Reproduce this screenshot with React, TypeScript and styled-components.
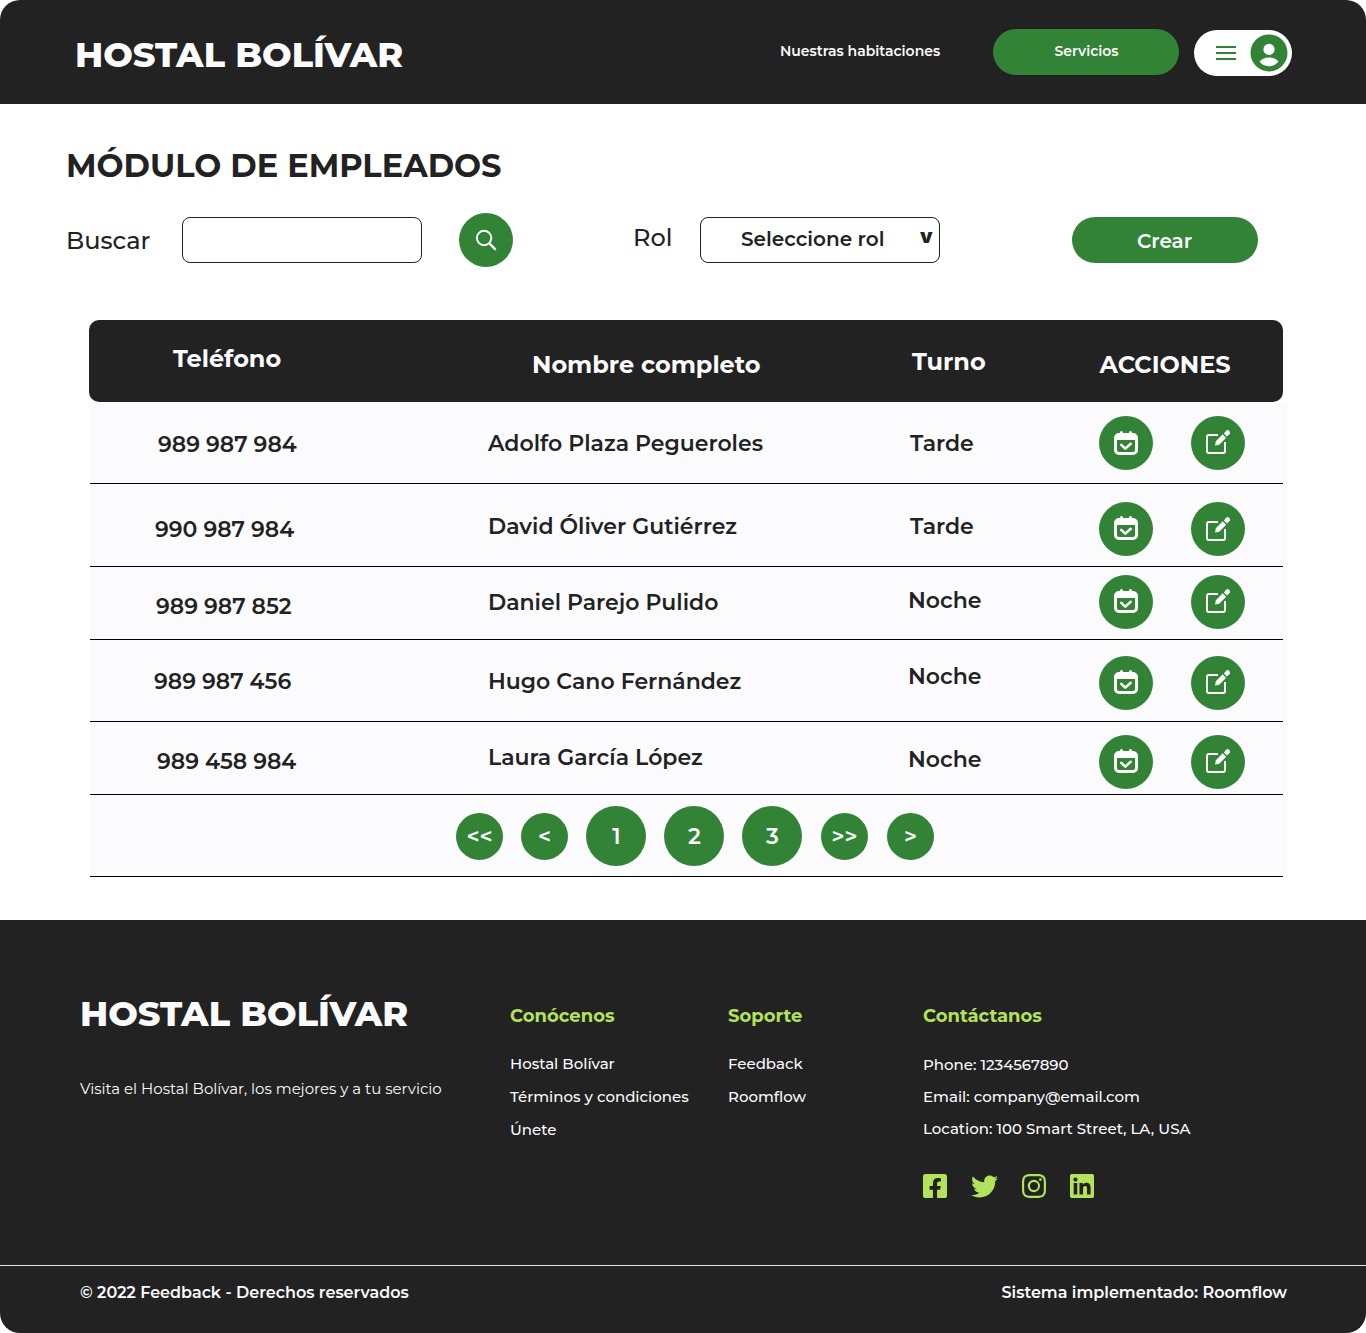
import React from 'react';
import styled, { createGlobalStyle } from 'styled-components';
import { FaFacebookSquare, FaTwitter, FaLinkedin } from 'react-icons/fa';
import { BsInstagram } from 'react-icons/bs';

const dark = '#222222';
const green = '#328336';
const lime = '#b2e35a';
const paper = '#fbfbfe';

const GlobalStyle = createGlobalStyle`
  * { box-sizing: border-box; }
  body { margin: 0; background: #fff; font-family: Montserrat, Inter, sans-serif; color: ${dark}; }
  h1, h2, h3, p, ul { margin: 0; padding: 0; list-style: none; }
  button { border: 0; padding: 0; font: inherit; color: inherit; cursor: pointer; }
`;

const Page = styled.div`
  width: 1366px;
  height: 1333px;
  display: flex;
  flex-direction: column;
  overflow: hidden;
`;

const Text = styled.span`
  display: block;
  white-space: nowrap;
`;

/* Header */
const TopBar = styled.header`
  display: flex;
  align-items: flex-start;
  height: 104px;
  padding-left: 75px;
  background: ${dark};
  color: ${paper};
  border-radius: 20px 20px 0 0;
`;
const Brand = styled(Text)`
  font-size: 35px;
  line-height: 43px;
  font-weight: 800;
  color: ${paper};
`;
const TopBrand = styled(Brand)`
  width: 705px;
  margin-top: 33px;
`;
const NavText = styled(Text)`
  font-size: 14px;
  line-height: 18px;
  font-weight: 600;
`;
const NavLink = styled(NavText)`
  width: 213px;
  margin-top: 42px;
`;
const Pill = styled.button`
  display: flex;
  justify-content: center;
  align-items: flex-start;
  width: 186px;
  height: 46px;
  border-radius: 23px;
  background: ${green};
  color: ${paper};
`;
const ServicesPill = styled(Pill)`
  margin-top: 29px;
  padding: 13px 0 0 1px;
`;
const UserMenu = styled.button`
  display: flex;
  align-items: center;
  width: 98px;
  height: 46px;
  margin: 30px 0 0 15px;
  padding-left: 22px;
  gap: 14px;
  border-radius: 23px;
  background: #fff;
`;

/* Toolbar */
const Title = styled.h1`
  margin: 42px 0 0 66px;
  font-size: 32px;
  line-height: 39px;
  font-weight: 700;
  white-space: nowrap;
`;
const Toolbar = styled.div`
  display: flex;
  align-items: flex-start;
  height: 135px;
  padding: 28px 0 0 66px;
`;
const Label = styled(Text)<{ $w: number; $top: number }>`
  width: ${p => p.$w}px;
  margin-top: ${p => p.$top}px;
  font-size: 24px;
  line-height: 29px;
  font-weight: 500;
`;
const Field = styled.input`
  width: 240px;
  height: 46px;
  margin-top: 4px;
  border: 1px solid ${dark};
  border-radius: 8px;
  background: #fff;
`;
const Select = styled.div`
  display: flex;
  width: 240px;
  height: 46px;
  margin-top: 4px;
  padding: 9px 0 0 40px;
  border: 1px solid ${dark};
  border-radius: 8px;
`;
const ControlText = styled(Text)`
  font-size: 20px;
  line-height: 24px;
  font-weight: 600;
`;
const SelectText = styled(ControlText)`
  width: 179px;
`;
const Caret = styled(ControlText)`
  margin-top: -3px;
  font-family: Inter, sans-serif;
  font-weight: 900;
`;
const CreatePill = styled(Pill)`
  margin: 4px 0 0 132px;
  padding: 12px 1px 0 0;
`;
const Round = styled.button<{ $d?: number; $lift?: number }>`
  display: flex;
  align-items: center;
  justify-content: center;
  flex: none;
  width: ${p => p.$d ?? 54}px;
  height: ${p => p.$d ?? 54}px;
  padding-bottom: ${p => (p.$lift ?? 0) * 2}px;
  border-radius: 50%;
  background: ${green};
  color: ${paper};
`;
const SearchButton = styled(Round)`
  margin: 0 120px 0 37px;
`;

/* Table */
const Table = styled.section`
  width: 1198px;
  margin-left: 89px;
`;
const HeadRow = styled.div`
  display: grid;
  grid-template-columns: 399px 420px 191px 184px;
  width: 1194px;
  height: 82px;
  background: ${dark};
  color: ${paper};
  border-radius: 10px;
`;
const Body = styled.div`
  margin-left: 1px;
  background: ${paper};
`;
const Row = styled.div<{ $h: number }>`
  display: grid;
  grid-template-columns: 398px 420px 191px 184px;
  width: 1193px;
  height: ${p => p.$h}px;
  border-bottom: 1px solid #000;
`;
const Cell = styled.div<{ $x: number; $y: number }>`
  display: flex;
  align-items: flex-start;
  padding: ${p => p.$y}px 0 0 ${p => p.$x}px;
`;
const HeadText = styled(Text)`
  font-size: 24px;
  line-height: 29px;
  font-weight: 700;
`;
const CellText = styled(Text)`
  font-size: 22px;
  line-height: 27px;
  font-weight: 600;
`;
const Actions = styled.div<{ $y: number }>`
  display: flex;
  gap: 38px;
  padding-top: ${p => p.$y}px;
`;
const Pager = styled.nav`
  display: flex;
  align-items: center;
  width: 1193px;
  height: 82px;
  padding: 1px 0 0 366px;
  gap: 18px;
  border-bottom: 1px solid #000;
`;
const PageNumber = styled(Round)`
  padding-left: 1px;
  font-size: 22px;
  line-height: 27px;
  font-weight: 600;
`;
const PageArrow = styled(PageNumber)<{ $push?: number }>`
  margin-top: 1px;
  margin-left: ${p => p.$push ?? 0}px;
  padding-left: 0;
`;

/* Footer */
const Footer = styled.footer`
  display: flex;
  flex-direction: column;
  height: 413px;
  margin-top: auto;
  background: ${dark};
  color: ${paper};
  border-radius: 0 0 20px 20px;
`;
const FooterMain = styled.div`
  display: grid;
  grid-template-columns: 430px 218px 195px 1fr;
  height: 346px;
  padding-left: 80px;
  border-bottom: 1px solid #e4e4e6;
`;
const About = styled.div`
  padding-top: 72px;
`;
const Tagline = styled(Text)`
  margin-top: 44px;
  font-size: 15px;
  line-height: 19px;
`;
const Column = styled.div`
  padding-top: 85px;
`;
const ColumnTitle = styled(Text)`
  font-size: 18px;
  line-height: 22px;
  font-weight: 700;
  color: ${lime};
`;
const Links = styled.ul<{ $top: number; $gap: number }>`
  display: flex;
  flex-direction: column;
  margin-top: ${p => p.$top}px;
  gap: ${p => p.$gap}px;
`;
const LinkText = styled(Text)`
  font-size: 15px;
  line-height: 19px;
  font-weight: 500;
`;
const Social = styled.div`
  display: flex;
  align-items: center;
  gap: 24px;
  height: 24px;
  margin-top: 36px;
  color: ${lime};
  svg { display: block; flex: none; }
`;
const Legal = styled.div`
  display: flex;
  justify-content: space-between;
  padding: 17px 79px 0 80px;
`;
const LegalText = styled(Text)`
  font-size: 16px;
  line-height: 19px;
  font-weight: 600;
`;

const MenuIcon = () => (
  <svg width="20" height="14" viewBox="0 0 20 14" fill={green}>
    <path d="M0 0h20v2H0zM0 6h20v2H0zM0 12h20v2H0z" />
  </svg>
);
const AvatarIcon = () => (
  <svg width="38" height="38" viewBox="0 0 38 38">
    <circle cx="19" cy="18.9" r="18.5" fill={green} />
    <circle cx="19" cy="15.4" r="5.6" fill="#fff" />
    <path d="M9.6 27.600c1.600-2.500 5.200-4.200 9.400-4.200s7.800 1.700 9.400 4.200c-2 2.900-5.400 4.700-9.400 4.700s-7.400-1.800-9.400-4.700z" fill="#fff" />
  </svg>
);
const SearchIcon = () => (
  <svg width="22" height="22" viewBox="0 0 22 22" fill="none" stroke="#fff" strokeLinecap="round">
    <circle cx="9.1" cy="9" r="7.2" strokeWidth="1.9" />
    <path d="M14.4 14.4l5.700 5.700" strokeWidth="2.300" />
  </svg>
);
const CalendarIcon = () => (
  <svg width="24" height="24" viewBox="0 0 24 24" fill="none">
    <path
      fillRule="evenodd"
      fill="#fff"
      d="M6 1.500a1.500 1.500 0 0 1 3 0V2h6v-.5a1.500 1.500 0 0 1 3 0V2h1a5 5 0 0 1 5 5v12a5 5 0 0 1-5 5H5a5 5 0 0 1-5-5V7a5 5 0 0 1 5-5h1zM3 9v10a2 2 0 0 0 2 2h14a2 2 0 0 0 2-2V9z"
    />
    <path d="M7.300 13.900l4 3.700 5.400-4.800" stroke="#fff" strokeWidth="2.600" strokeLinecap="round" strokeLinejoin="round" />
  </svg>
);
const EditIcon = () => (
  <svg width="24" height="24" viewBox="0 0 24 24" fill="none">
    <path d="M12 5H3A2 2 0 0 0 1 7v14A2 2 0 0 0 3 23h14a2 2 0 0 0 2-2V12" stroke="#fff" strokeWidth="2" />
    <path d="M9.300 15.300l.9-4.100 6.500-6.600 3.200 3.200-6.700 6.600z" fill="#fff" stroke="#fff" strokeWidth=".5" strokeLinejoin="round" />
    <path d="M17.900 3.400l2-2.500a2.400 2.400 0 0 1 3.400 3.400l-2.400 2.100z" fill="#fff" />
  </svg>
);

interface Employee {
  h: number;
  phone: string; phoneX: number; phoneY: number;
  name: string; nameY: number;
  shift: string; shiftX: number; shiftY: number;
  actionsY: number;
  calendarLift: number; editLift: number;
}
const employees: Employee[] = [
  { h: 82, phone: '989 987 984', phoneX: 68, phoneY: 29, name: 'Adolfo Plaza Pegueroles', nameY: 28, shift: 'Tarde', shiftX: 2, shiftY: 28, actionsY: 14, calendarLift: 0, editLift: 1 },
  { h: 83, phone: '990 987 984', phoneX: 65, phoneY: 32, name: 'David Óliver Gutiérrez', nameY: 29, shift: 'Tarde', shiftX: 2, shiftY: 29, actionsY: 18, calendarLift: 1, editLift: 0 },
  { h: 73, phone: '989 987 852', phoneX: 66, phoneY: 26, name: 'Daniel Parejo Pulido', nameY: 22, shift: 'Noche', shiftX: 0, shiftY: 20, actionsY: 8, calendarLift: 1, editLift: 1 },
  { h: 82, phone: '989 987 456', phoneX: 64, phoneY: 28, name: 'Hugo Cano Fernández', nameY: 28, shift: 'Noche', shiftX: 0, shiftY: 23, actionsY: 16, calendarLift: 1, editLift: 1 },
  { h: 73, phone: '989 458 984', phoneX: 67, phoneY: 26, name: 'Laura García López', nameY: 22, shift: 'Noche', shiftX: 0, shiftY: 24, actionsY: 13, calendarLift: 1, editLift: 1 },
];

const LinkList = ({ items, top, gap }: { items: string[]; top: number; gap: number }) => (
  <Links $top={top} $gap={gap}>
    {items.map(label => (
      <li key={label}><LinkText>{label}</LinkText></li>
    ))}
  </Links>
);

export default function App() {
  return (
    <Page>
      <GlobalStyle />
      <TopBar>
        <TopBrand>HOSTAL BOLÍVAR</TopBrand>
        <NavLink>Nuestras habitaciones</NavLink>
        <ServicesPill><NavText>Servicios</NavText></ServicesPill>
        <UserMenu aria-label="Menú"><MenuIcon /><AvatarIcon /></UserMenu>
      </TopBar>

      <Title>MÓDULO DE EMPLEADOS</Title>
      <Toolbar>
        <Label $w={116} $top={13}>Buscar</Label>
        <Field />
        <SearchButton aria-label="Buscar"><SearchIcon /></SearchButton>
        <Label $w={67} $top={10}>Rol</Label>
        <Select>
          <SelectText>Seleccione rol</SelectText>
          <Caret>v</Caret>
        </Select>
        <CreatePill><ControlText>Crear</ControlText></CreatePill>
      </Toolbar>

      <Table>
        <HeadRow>
          <Cell $x={84} $y={24}><HeadText>Teléfono</HeadText></Cell>
          <Cell $x={44} $y={30}><HeadText>Nombre completo</HeadText></Cell>
          <Cell $x={4} $y={27}><HeadText>Turno</HeadText></Cell>
          <Cell $x={0.5} $y={30}><HeadText>ACCIONES</HeadText></Cell>
        </HeadRow>
        <Body>
          {employees.map(e => (
            <Row key={e.phone} $h={e.h}>
              <Cell $x={e.phoneX} $y={e.phoneY}><CellText>{e.phone}</CellText></Cell>
              <Cell $x={0} $y={e.nameY}><CellText>{e.name}</CellText></Cell>
              <Cell $x={e.shiftX} $y={e.shiftY}><CellText>{e.shift}</CellText></Cell>
              <Actions $y={e.actionsY}>
                <Round aria-label="Horario" $lift={e.calendarLift}><CalendarIcon /></Round>
                <Round aria-label="Editar" $lift={e.editLift}><EditIcon /></Round>
              </Actions>
            </Row>
          ))}
          <Pager>
            <PageArrow $d={47}>&lt;&lt;</PageArrow>
            <PageArrow $d={47}>&lt;</PageArrow>
            <PageNumber $d={60}>1</PageNumber>
            <PageNumber $d={60}>2</PageNumber>
            <PageNumber $d={60}>3</PageNumber>
            <PageArrow $d={47} $push={1}>&gt;&gt;</PageArrow>
            <PageArrow $d={47} $push={1}>&gt;</PageArrow>
          </Pager>
        </Body>
      </Table>

      <Footer>
        <FooterMain>
          <About>
            <Brand>HOSTAL BOLÍVAR</Brand>
            <Tagline>Visita el Hostal Bolívar, los mejores y a tu servicio</Tagline>
          </About>
          <Column>
            <ColumnTitle>Conócenos</ColumnTitle>
            <LinkList top={27} gap={14} items={['Hostal Bolívar', 'Términos y condiciones', 'Únete']} />
          </Column>
          <Column>
            <ColumnTitle>Soporte</ColumnTitle>
            <LinkList top={27} gap={14} items={['Feedback', 'Roomflow']} />
          </Column>
          <Column>
            <ColumnTitle>Contáctanos</ColumnTitle>
            <LinkList
              top={28}
              gap={13}
              items={['Phone: 1234567890', 'Email: company@email.com', 'Location: 100 Smart Street, LA, USA']}
            />
            <Social>
              <FaFacebookSquare size={24} viewBox="0 32 448 448" />
              <FaTwitter size={27} />
              <BsInstagram size={24} />
              <FaLinkedin size={24} viewBox="0 32 448 448" />
            </Social>
          </Column>
        </FooterMain>
        <Legal>
          <LegalText>© 2022 Feedback - Derechos reservados</LegalText>
          <LegalText>Sistema implementado: Roomflow</LegalText>
        </Legal>
      </Footer>
    </Page>
  );
}
